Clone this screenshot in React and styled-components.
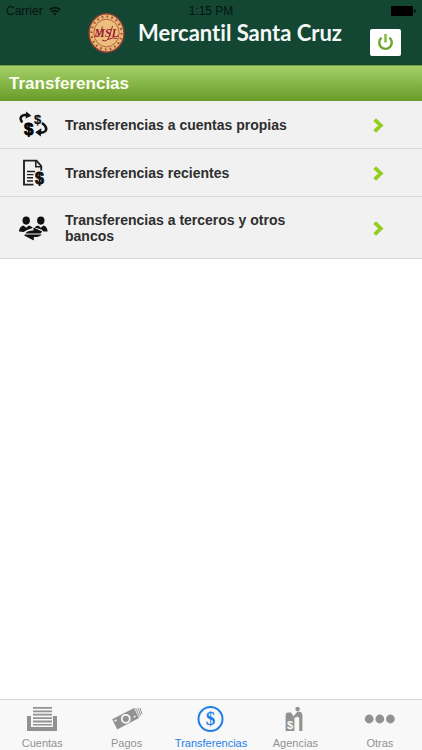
import React, { Component } from 'react';
import styled, { createGlobalStyle } from 'styled-components';

const GlobalStyle = createGlobalStyle`
	* {
		box-sizing: border-box;
	}

	body {
		margin: 0;
		background-color: #ffffff;
		font-family: "Liberation Sans", Arial, sans-serif;
	}
`;

const Page = styled.div`
	display: flex;
	flex-direction: column;
	min-height: 100vh;
`;

const Header = styled.header`
	position: relative;
	display: flex;
	align-items: flex-start;
	padding: 13px 21px 12px 88px;
	background-color: #134734;
`;

const StatusBar = styled.div`
	position: absolute;
	top: 0;
	left: 0;
	right: 0;
	display: grid;
	grid-template-columns: 1fr auto 1fr;
	align-items: center;
	height: 22px;
	padding: 0 6px;
	color: #06140e;
	font-size: 12px;
`;

const Carrier = styled.span`
	display: flex;
	align-items: center;
	gap: 6px;
`;

const Battery = styled.svg`
	justify-self: end;
`;

const Brand = styled.div`
	display: flex;
	flex: 1;
	align-items: center;
	gap: 13px;
`;

const BrandName = styled.span`
	color: #f4f8f6;
	font-family: Lato, "Open Sans", sans-serif;
	font-size: 22px;
	font-variant-ligatures: none;
	font-weight: bold;
	line-height: 40px;
	white-space: nowrap;
`;

const PowerButton = styled.button`
	display: flex;
	align-items: center;
	justify-content: center;
	width: 31px;
	height: 27px;
	margin-top: 16px;
	margin-bottom: -4px;
	padding: 0;
	border: 0;
	border-radius: 2px;
	background-color: #ffffff;
	cursor: pointer;
`;

const Title = styled.h1`
	margin: 0;
	padding: 0 9px;
	border-top: 1px solid #6f9d48;
	background-image: linear-gradient(#a4d067, #699b29);
	color: #fbfff0;
	font-size: 17px;
	font-weight: bold;
	line-height: 35px;
`;

const List = styled.ul`
	flex: 1;
	margin: 0;
	padding: 0;
	list-style: none;
`;

const RowLink = styled.a`
	display: flex;
	align-items: center;
	min-height: 48px;
	padding: 15px 38px 14px 18px;
	border-bottom: 1px solid #dadada;
	background-color: #f1f1f1;
	color: #2e2e2e;
	font-size: 14px;
	font-weight: bold;
	line-height: 16px;
	text-decoration: none;
`;

const RowIcon = styled.svg`
	flex: none;
	width: 30px;
	height: 30px;
	margin: -7px 0;
`;

const RowLabel = styled.span`
	flex: 1;
	padding: 0 72px 0 17px;
`;

const TabBar = styled.nav`
	display: flex;
	border-top: 1px solid #d2d2d2;
	background-color: #f8f8f8;
`;

const Tab = styled.a`
	display: flex;
	flex: 1 1 0;
	flex-direction: column;
	align-items: center;
	gap: 1px;
	padding-top: 3px;
	color: ${props => (props.$active ? '#1f7fe8' : '#929292')};
	font-size: 11px;
	line-height: 14px;
	text-decoration: none;
`;

const Wifi = () => (
	<svg width="12" height="10" viewBox="0 0 12 10" fill="none" stroke="currentColor" strokeWidth="1.7" aria-hidden="true">
		<path d="M0.6 3.8 a7.6 7.6 0 0 1 10.8 0" />
		<path d="M2.6 6 a4.8 4.8 0 0 1 6.8 0" />
		<path d="M6 9.6 L4.1 7.6 a2.8 2.8 0 0 1 3.8 0 z" fill="currentColor" stroke="none" />
	</svg>
);

const Seal = () => (
	<svg width="37" height="40" viewBox="0 0 37 40" aria-hidden="true">
		<ellipse cx="18.5" cy="20" rx="17.5" ry="19.2" fill="#e7b872" stroke="#8d3a35" strokeWidth="1.4" />
		<ellipse cx="18.5" cy="20" rx="15" ry="16.5" fill="none" stroke="#a94d3c" strokeWidth="2.2" strokeDasharray="1.6 3.2" pathLength="96" />
		<ellipse cx="18.5" cy="20" rx="12.6" ry="13.8" fill="#ecc07c" stroke="#b0553f" strokeWidth="0.9" />
		<text x="18.5" y="24" fontFamily="Liberation Serif, serif" fontSize="12" fontStyle="italic" fontWeight="bold" fill="#9c1f35" textAnchor="middle">MSL</text>
		<path d="M7.5 22.5 q2.5 3 5 -3 l2 -6 M14 27 q5 3 7.5 -4 l3 -10 M20 26.5 q5 -2.5 9 -1" fill="none" stroke="#9c1f35" strokeWidth="1" />
	</svg>
);

const Power = () => (
	<svg width="17" height="19" viewBox="0 0 17 19" fill="none" stroke="#6da52c" aria-hidden="true">
		<path d="M4.6 4.6 a6.3 6.3 0 1 0 7.8 0" strokeWidth="2.4" />
		<path d="M8.5 1 v8.5" stroke="#8cbf48" strokeWidth="2.6" />
	</svg>
);

const Chevron = () => (
	<svg width="11" height="15" viewBox="0 0 11 15" fill="none" stroke="#93cd1d" strokeWidth="3.8" aria-hidden="true">
		<path d="M1.7 1.6 L7.8 7.5 L1.7 13.4" />
	</svg>
);

const Dollar = ({ x, y, size, ...rest }) => (
	<text x={x} y={y} fontFamily="Liberation Sans, sans-serif" fontSize={size} fontWeight="bold" textAnchor="middle" {...rest}>$</text>
);

const OwnAccounts = () => (
	<RowIcon viewBox="0 0 30 30" aria-hidden="true">
		<path d="M4.2 12.4 Q0.6 7.4 5 5.4 Q7 4.6 10 4.8" fill="none" stroke="#111" strokeWidth="2.6" />
		<path d="M8.2 1.6 L13.4 5.8 L7.6 8.6 Z" fill="#111" />
		<path d="M24 13 Q30 17.5 27.4 21 Q25.8 22.8 22.5 22.6" fill="none" stroke="#111" strokeWidth="2.6" />
		<path d="M23.4 18.2 L17.2 22.2 L22.8 26.4 Z" fill="#111" />
		<Dollar x="10.8" y="24.6" size="17" fill="#000" stroke="#000" strokeWidth="0.8" />
		<Dollar x="19.6" y="13.8" size="13" fill="#111" stroke="#111" strokeWidth="0.3" />
	</RowIcon>
);

const RecentTransfers = () => (
	<RowIcon viewBox="0 0 30 30" aria-hidden="true">
		<path d="M15.5 26.6 H6 V2.6 H18.5 L23.2 8 V12.5" fill="none" stroke="#222" strokeWidth="1.9" />
		<path d="M17.8 3 V8.8 H23.5" fill="none" stroke="#222" strokeWidth="1.6" />
		<path d="M9 13.5 h8 M9 16.6 h6.5 M9 19.8 h6 M9 23 h6" stroke="#222" strokeWidth="1.4" />
		<Dollar x="21.4" y="26.4" size="16" fill="#111" stroke="#111" strokeWidth="0.8" />
	</RowIcon>
);

const ThirdParties = () => (
	<RowIcon viewBox="0 0 30 30" fill="#111" aria-hidden="true">
		<ellipse cx="8.2" cy="7.6" rx="3.7" ry="4.1" />
		<ellipse cx="22.8" cy="7.6" rx="3.7" ry="4.1" />
		<path d="M1 18.6 Q1 13.6 5.6 12.4 L8.2 14.8 L10.8 12.4 Q13.8 13.2 14.8 15 L9 17 L5.8 19 Z" />
		<path d="M29.6 18.6 Q29.6 13.6 25.4 12.4 L22.8 14.8 L20.2 12.4 Q17.6 13 16.6 14.4 L23.4 16.6 L25.4 18.6 Z" />
		<path d="M7.4 20.6 Q9.2 17.4 15.4 17.6 V14.6 L24.2 18.6 L22.6 20.6 Z" />
		<path d="M23.6 21.4 Q21.2 24.2 15.8 24 V27.4 L6.2 22.4 L7 21.4 Z" />
	</RowIcon>
);

const TabIcon = ({ children }) => (
	<svg width="32" height="32" viewBox="0 0 32 32" fill="currentColor" aria-hidden="true">
		{children}
	</svg>
);

const AccountsIcon = () => (
	<TabIcon>
		<path d="M1 13 H5 V24 H27 V13 H31 V28 H1 Z" />
		<path d="M7 4 h19 v1.8 h-19 z M7 7.4 h19 v1.8 h-19 z M7 10.8 h19 v1.8 h-19 z M7 14.2 h19 v1.8 h-19 z M7 17.6 h19 v1.8 h-19 z M7 21 h19 v1.6 h-19 z" />
	</TabIcon>
);

const PaymentsIcon = () => (
	<TabIcon>
		<path d="M1.2 16.3 L23 5 L28 15 L6.2 26.5 Z" />
		<circle cx="14.8" cy="15.8" r="4" fill="none" stroke="#f8f8f8" strokeWidth="1.8" />
		<path d="M3.5 18 l2 -1 M24.6 13.2 l-2 1" stroke="#f8f8f8" strokeWidth="1.4" />
		<path d="M24.6 5.2 L28.6 13.6 M26.8 5 L29.8 12.4 M29 5 L31 11" stroke="currentColor" strokeWidth="1" />
	</TabIcon>
);

const TransfersIcon = () => (
	<TabIcon>
		<circle cx="15.5" cy="16" r="12" fill="none" stroke="currentColor" strokeWidth="2" />
		<text x="15.5" y="22" fontFamily="Liberation Serif, serif" fontSize="19" fontWeight="bold" textAnchor="middle">$</text>
	</TabIcon>
);

const BranchesIcon = () => (
	<TabIcon>
		<path d="M6.6 28 V12 Q6.6 9.4 9 9.4 H12 L15.4 14.5 V28 Z" />
		<Dollar x="11" y="25.5" size="11" fill="#f8f8f8" />
		<circle cx="18.6" cy="6" r="2.3" />
		<path d="M18.5 8.6 Q23 8.6 23.4 12 V28 H20.2 V15 L18.6 13.4 L15.6 15 L14.4 13.6 Z" />
	</TabIcon>
);

const MoreIcon = () => (
	<TabIcon>
		<circle cx="5.2" cy="16" r="4.4" />
		<circle cx="15.8" cy="16" r="4.4" />
		<circle cx="26.4" cy="16" r="4.4" />
	</TabIcon>
);

const rows = [
	{ label: 'Transferencias a cuentas propias', href: '#propias', Icon: OwnAccounts },
	{ label: 'Transferencias recientes', href: '#recientes', Icon: RecentTransfers },
	{ label: 'Transferencias a terceros y otros bancos', href: '#terceros', Icon: ThirdParties },
];

const tabs = [
	{ label: 'Cuentas', href: '#cuentas', Icon: AccountsIcon },
	{ label: 'Pagos', href: '#pagos', Icon: PaymentsIcon },
	{ label: 'Transferencias', href: '#transferencias', Icon: TransfersIcon, active: true },
	{ label: 'Agencias', href: '#agencias', Icon: BranchesIcon },
	{ label: 'Otras', href: '#otras', Icon: MoreIcon },
];

class App extends Component {
	render() {
		return (
			<Page>
				<GlobalStyle />
				<Header>
					<StatusBar>
						<Carrier>Carrier <Wifi /></Carrier>
						<span>1:15 PM</span>
						<Battery width="25" height="10" viewBox="0 0 25 10" fill="#000" aria-hidden="true">
							<rect width="22" height="10" rx="1" />
							<rect x="23" y="3.5" width="1.4" height="3" />
						</Battery>
					</StatusBar>
					<Brand>
						<Seal />
						<BrandName>Mercantil Santa Cruz</BrandName>
					</Brand>
					<PowerButton type="button" aria-label="Salir">
						<Power />
					</PowerButton>
				</Header>

				<Title>Transferencias</Title>

				<List>
					{rows.map(({ label, href, Icon }) => (
						<li key={href}>
							<RowLink href={href}>
								<Icon />
								<RowLabel>{label}</RowLabel>
								<Chevron />
							</RowLink>
						</li>
					))}
				</List>

				<TabBar>
					{tabs.map(({ label, href, Icon, active }) => (
						<Tab key={href} href={href} $active={active} aria-current={active ? 'page' : undefined}>
							<Icon />
							{label}
						</Tab>
					))}
				</TabBar>
			</Page>
		);
	}
}

export default App;
